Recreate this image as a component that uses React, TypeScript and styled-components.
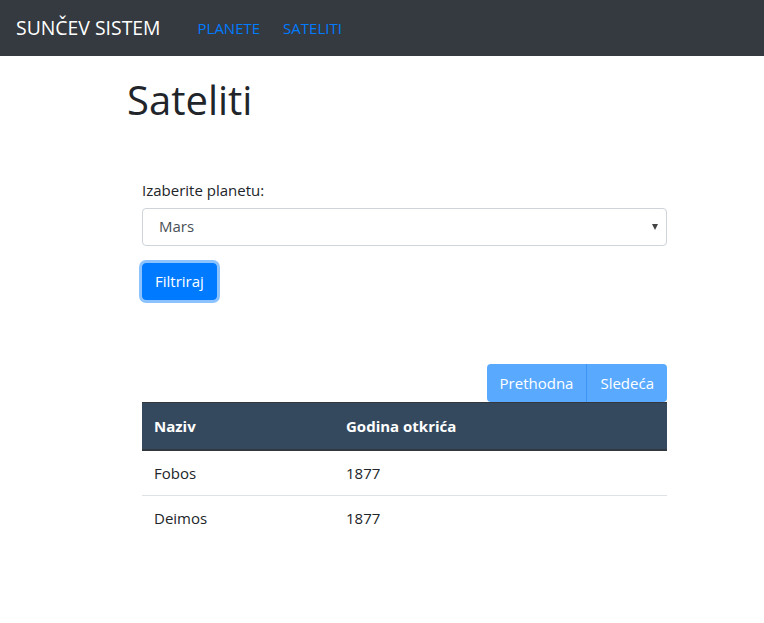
import styled, { createGlobalStyle } from "styled-components";

const GlobalStyle = createGlobalStyle`
    body {
        margin: 0;
        background: #fff;
        color: #212529;
        font-family: "Open Sans", "Noto Sans", sans-serif;
        font-size: 16px;
        line-height: 1.5;
    }
    * {
        box-sizing: border-box;
    }
`;

const Navbar = styled.nav`
    height: 56px;
    background: #343a40;
    display: flex;
    align-items: center;
    padding: 0 16px;
`;

const Brand = styled.span`
    color: #fff;
    font-size: 19.4px;
    margin-right: 37px;
`;

const NavLink = styled.a`
    color: #007bff;
    font-size: 15px;
    text-decoration: none;
    margin-right: 23px;
`;

const Container = styled.main`
    max-width: 540px;
    margin: 0 auto;
    padding: 0 15px;
`;

const Title = styled.h1`
    font-size: 40px;
    font-weight: 500;
    line-height: 1.2;
    margin: 20px 0 0;
`;

const Section = styled.section`
    width: 525px;
    margin: 55px 0 0 15px;
`;

const Label = styled.label`
    display: block;
    font-size: 15px;
    margin-bottom: 6px;
`;

const SelectBox = styled.div`
    height: 38px;
    border: 1px solid #ced4da;
    border-radius: 4px;
    display: flex;
    align-items: center;
    justify-content: space-between;
    padding: 0 8px 0 16px;
    color: #495057;
    font-size: 15px;
`;

const Caret = styled.span`
    width: 0;
    height: 0;
    border-left: 3.5px solid transparent;
    border-right: 3.5px solid transparent;
    border-top: 6px solid #444;
`;

const PrimaryButton = styled.button`
    margin-top: 17px;
    height: 37px;
    padding: 0 12px;
    background: #007bff;
    color: #fff;
    border: 1px solid #007bff;
    border-radius: 4px;
    font-family: inherit;
    font-size: 15px;
    box-shadow: 0 0 0 3px rgba(0, 123, 255, 0.45);
`;

const Pager = styled.div`
    display: flex;
    justify-content: flex-end;
    margin-top: 64px;
`;

const PagerButton = styled.button<{ $first?: boolean; $last?: boolean }>`
    height: 38px;
    padding: 0 13px;
    background: #59a9ff;
    color: #fff;
    border: none;
    border-left: ${({ $first }) => ($first ? "none" : "1px solid #3d95f5")};
    border-radius: ${({ $first, $last }) =>
        $first ? "4px 0 0 4px" : $last ? "0 4px 4px 0" : "0"};
    font-family: inherit;
    font-size: 15px;
`;

const Table = styled.table`
    width: 100%;
    border-collapse: collapse;
`;

const HeadCell = styled.th<{ $width?: number }>`
    width: ${({ $width }) => ($width ? `${$width}px` : "auto")};
    text-align: left;
    background: #34495e;
    color: #fff;
    font-size: 15px;
    font-weight: 700;
    padding: 12px;
    height: 48px;
    border-top: 1px solid #32383e;
    border-bottom: 2px solid #32383e;
`;

const Cell = styled.td<{ $last?: boolean }>`
    padding: 10px 12px;
    height: 45px;
    font-size: 15px;
    border-bottom: ${({ $last }) => ($last ? "none" : "1px solid #dee2e6")};
`;

const satellites = [
    { name: "Fobos", year: 1877 },
    { name: "Deimos", year: 1877 },
];

export default function App() {
    return (
        <>
            <GlobalStyle />
            <Navbar>
                <Brand>SUNČEV SISTEM</Brand>
                <NavLink href="#">PLANETE</NavLink>
                <NavLink href="#">SATELITI</NavLink>
            </Navbar>
            <Container>
                <Title>Sateliti</Title>
                <Section>
                    <Label>Izaberite planetu:</Label>
                    <SelectBox>
                        <span>Mars</span>
                        <Caret />
                    </SelectBox>
                    <PrimaryButton>Filtriraj</PrimaryButton>
                    <Pager>
                        <PagerButton $first>Prethodna</PagerButton>
                        <PagerButton $last>Sledeća</PagerButton>
                    </Pager>
                    <Table>
                        <thead>
                            <tr>
                                <HeadCell $width={192}>Naziv</HeadCell>
                                <HeadCell>Godina otkrića</HeadCell>
                            </tr>
                        </thead>
                        <tbody>
                            {satellites.map((s, i) => (
                                <tr key={s.name}>
                                    <Cell $last={i === satellites.length - 1}>{s.name}</Cell>
                                    <Cell $last={i === satellites.length - 1}>{s.year}</Cell>
                                </tr>
                            ))}
                        </tbody>
                    </Table>
                </Section>
            </Container>
        </>
    );
}
